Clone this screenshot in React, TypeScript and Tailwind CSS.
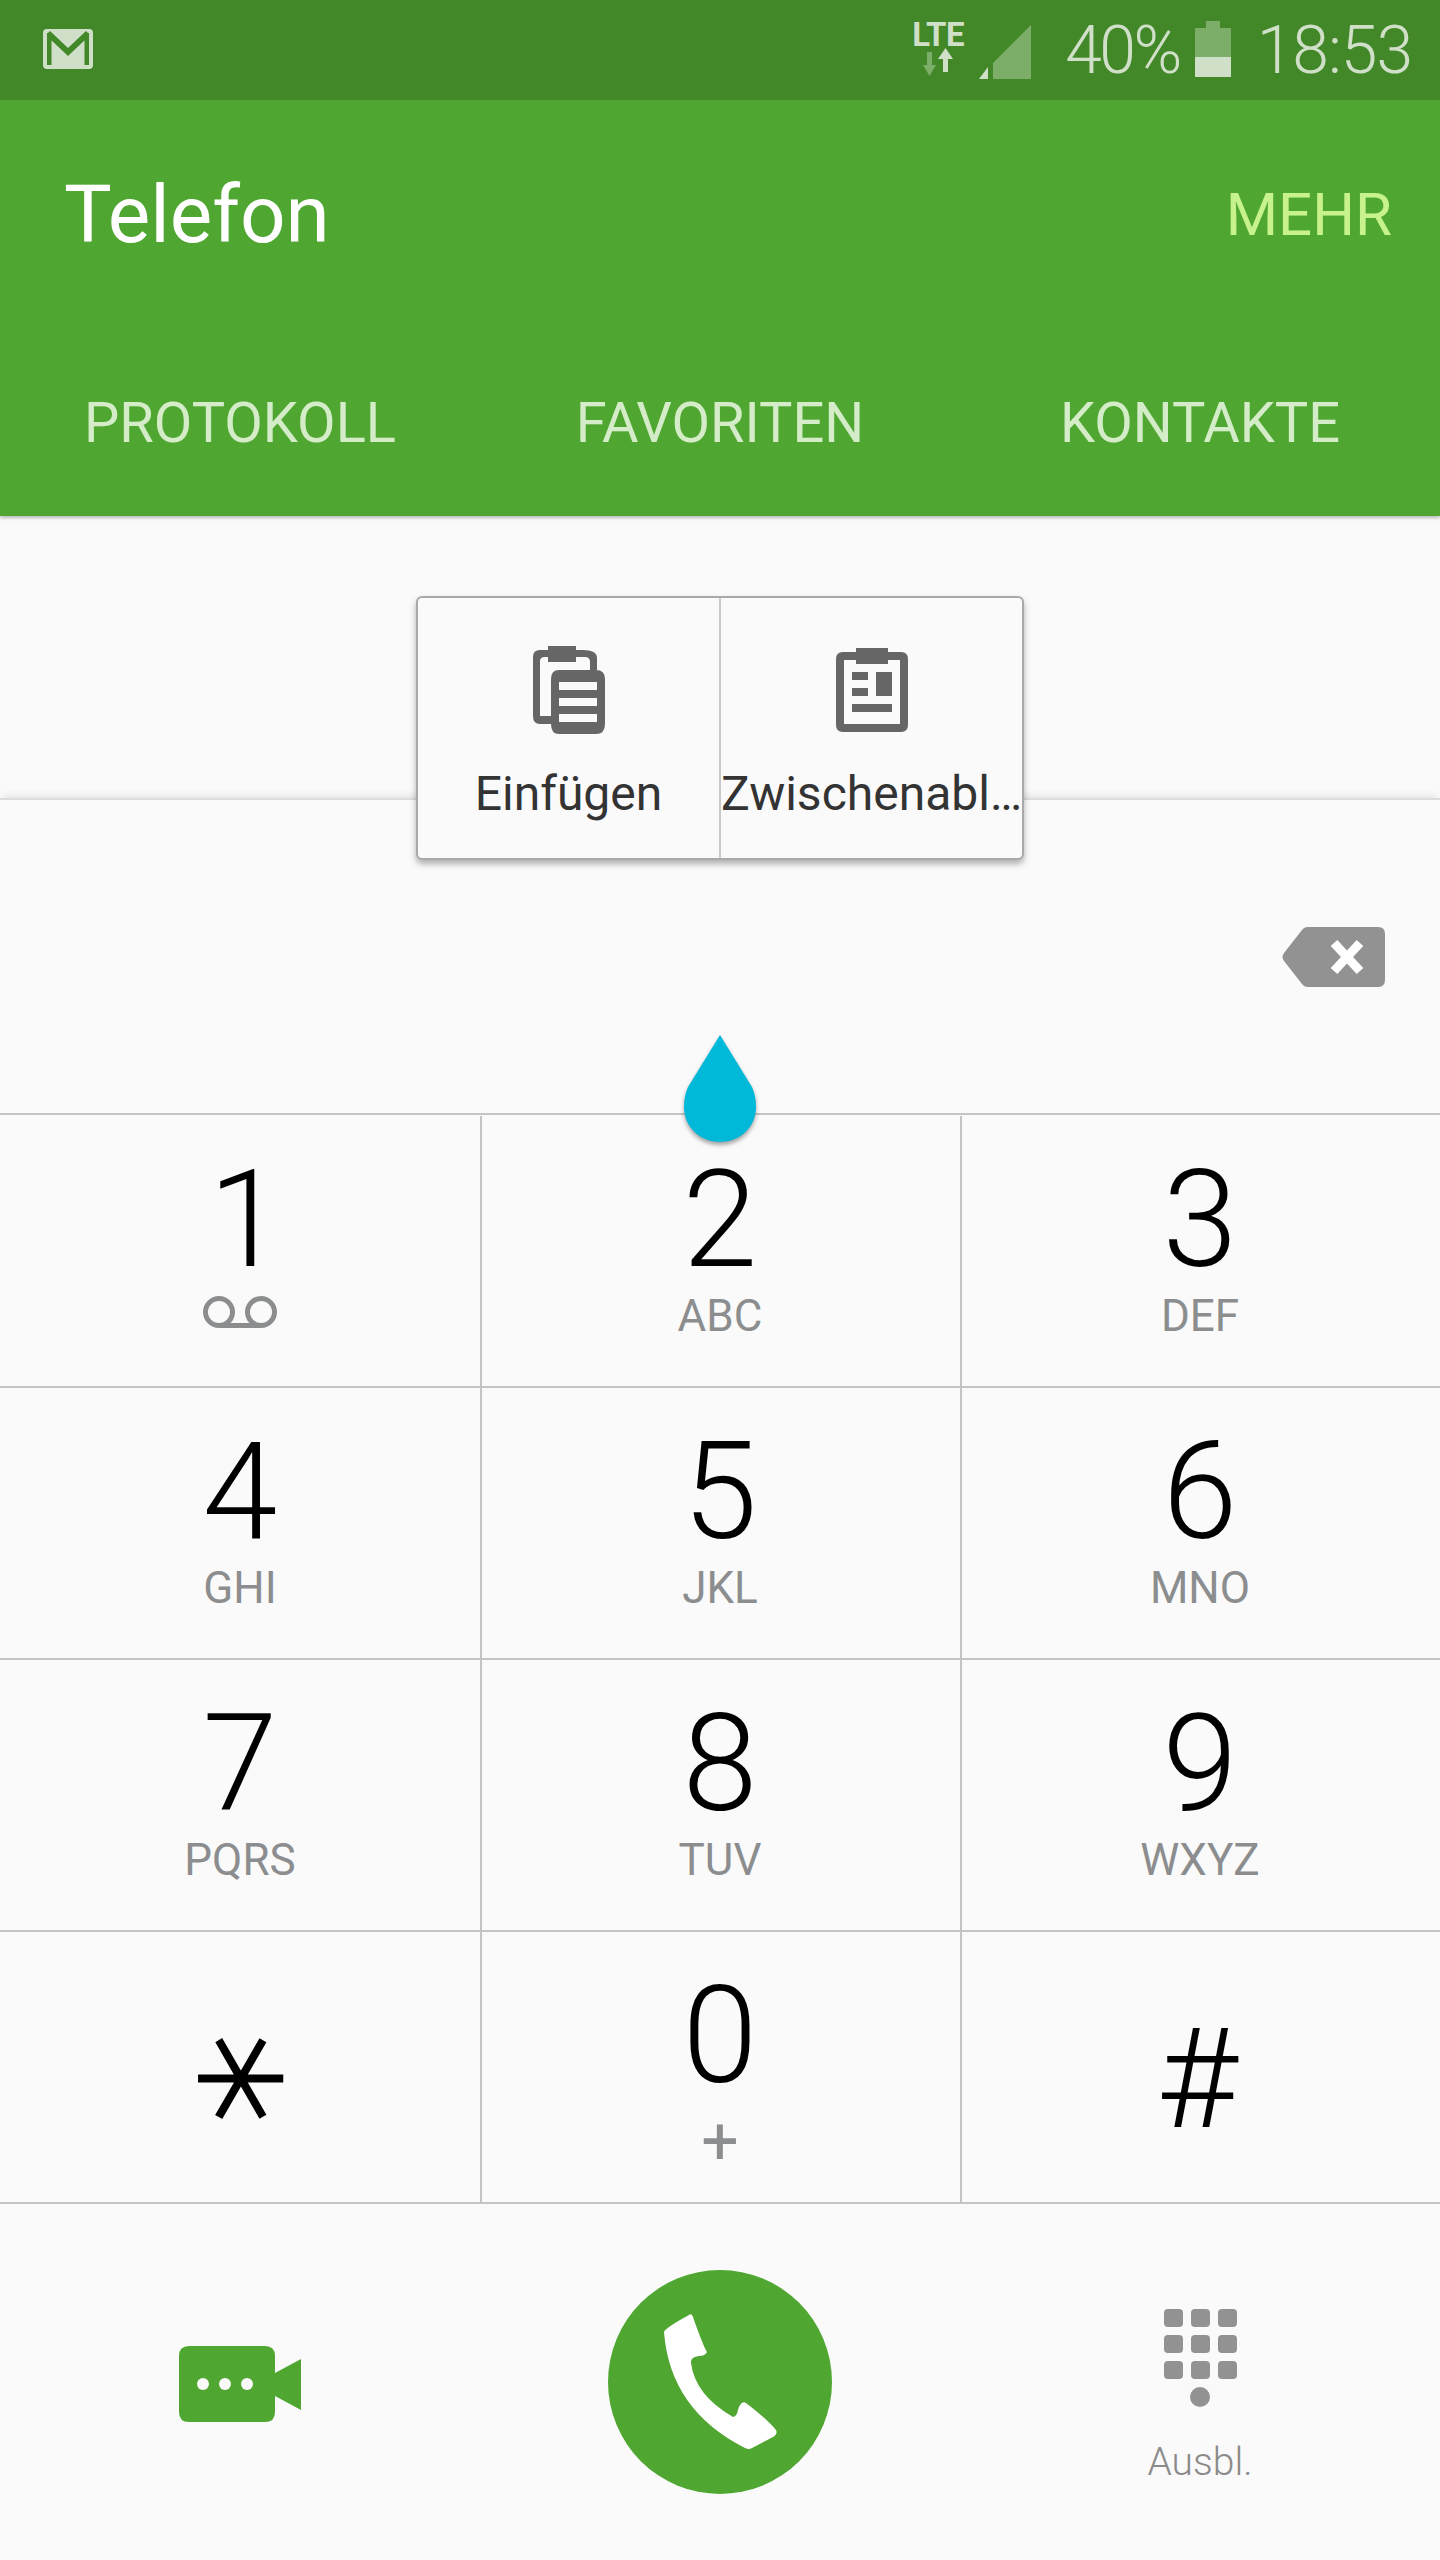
const keys = [
  { digit: "1", sub: "" },
  { digit: "2", sub: "ABC" },
  { digit: "3", sub: "DEF" },
  { digit: "4", sub: "GHI" },
  { digit: "5", sub: "JKL" },
  { digit: "6", sub: "MNO" },
  { digit: "7", sub: "PQRS" },
  { digit: "8", sub: "TUV" },
  { digit: "9", sub: "WXYZ" },
  { digit: "∗", sub: "" },
  { digit: "0", sub: "+" },
  { digit: "#", sub: "" },
];

function StatusBar() {
  return (
    <div className="h-[100px] bg-[#428828] flex items-center pl-[43px] pr-[28px] text-[#d0dfc8]">
      <svg width="50" height="40" viewBox="0 0 50 40" className="mt-[-2px]">
        <rect width="50" height="40" rx="4" fill="#d0dfc8" />
        <path d="M5 36V4M45 36V4" stroke="#428828" strokeWidth="2" />
        <path d="M6 3L25 21L44 3M7 36V8L25 25L43 8V36" fill="none" stroke="#428828" strokeWidth="3" />
      </svg>
      <div className="ml-auto flex flex-col items-center w-[56px] h-[56px]">
        <span className="text-[33px] leading-[26px] font-bold tracking-[-0.5px]">LTE</span>
        <svg width="34" height="28" viewBox="0 0 34 28">
          <path d="M6 4H11V17H15L8.5 28L2 17H6Z" fill="#7dae69" />
          <path d="M22 24V11H17L24.5 0L32 11H27V24Z" fill="#d0dfc8" />
        </svg>
      </div>
      <svg width="54" height="54" viewBox="0 0 54 54" className="ml-[12px] mt-[4px]">
        <path d="M15 38L53 0V54H15Z" fill="#7dae69" />
        <path d="M1 54L10 42V54Z" fill="#d0dfc8" />
      </svg>
      <span className="ml-[33px] mt-[2px] text-[66px] font-light leading-none tracking-[-2.5px]">40%</span>
      <div className="ml-[15px] flex flex-col items-center w-[36px] h-[56px] mt-[-2px]">
        <div className="w-[14px] h-[7px] bg-[#7dae69]" />
        <div className="w-[36px] h-[29px] bg-[#7dae69]" />
        <div className="w-[36px] h-[20px] bg-[#d0dfc8]" />
      </div>
      <span className="ml-[26px] mt-[2px] text-[66px] font-light leading-none tracking-[-1px]">18:53</span>
    </div>
  );
}

function Header() {
  return (
    <div className="h-[416px] bg-[#4fa731] shadow-[0_2px_3px_rgba(0,0,0,0.25)] relative">
      <div className="h-[230px] flex items-center justify-between pl-[64px] pr-[48px]">
        <span className="text-[80px] text-white">Telefon</span>
        <span className="text-[60px] text-[#c8f28d]">MEHR</span>
      </div>
      <div className="h-[186px] grid grid-cols-3 items-center text-[56px] text-[#d4ecc8] text-center">
        <span>PROTOKOLL</span>
        <span>FAVORITEN</span>
        <span>KONTAKTE</span>
      </div>
    </div>
  );
}

function ClipMenu() {
  return (
    <div className="absolute left-[416px] top-[596px] w-[608px] h-[264px] bg-[#fafafa] border-2 border-[#a9a9a9] rounded-[6px] shadow-[0_4px_6px_rgba(0,0,0,0.3)] flex text-[#333333] text-[48px]">
      <div className="w-[303px] border-r-2 border-[#c8c8c8] flex flex-col items-center pt-[48px]">
        <svg width="72" height="88" viewBox="0 0 72 88" fill="#666666">
          <path d="M7 4H15V0H43V4H50Q64 4 64 12V24H57V16Q57 11 52 11H43V16H15V11H12Q7 11 7 15V70H19V78H7Q0 78 0 70V11Q0 4 7 4Z" />
          <path fillRule="evenodd" d="M26 24H63Q72 24 72 33V78Q72 88 63 88H26Q18 88 18 78V33Q18 24 26 24ZM26 36V44H64V36ZM26 52V60H64V52ZM26 68V76H64V68Z" />
        </svg>
        <span className="mt-[36px] leading-none">Einfügen</span>
      </div>
      <div className="flex-1 min-w-0 flex flex-col items-center pt-[50px]">
        <svg width="72" height="84" viewBox="0 0 72 84" fill="#666666">
          <path fillRule="evenodd" d="M7 4H20V0H52V4H65Q72 4 72 11V77Q72 84 65 84H7Q0 84 0 77V11Q0 4 7 4ZM8 12V76H64V12H52V16H20V12Z" />
          <path d="M16 24H32V32H16ZM16 40H32V48H16ZM40 24H56V48H40ZM16 56H56V64H16Z" />
        </svg>
        <span className="mt-[38px] leading-none whitespace-nowrap">Zwischenabl…</span>
      </div>
    </div>
  );
}

function NumberField() {
  return (
    <div className="mt-[282px] h-[315px] border-t-2 border-[#dcdcdc] shadow-[0_-6px_8px_-4px_rgba(0,0,0,0.1)] flex justify-end pr-[54px] pt-[127px]">
      <svg width="104" height="60" viewBox="0 0 104 60">
        <path d="M26 0H96Q103 0 103 7V53Q103 60 96 60H26Q22 60 20 57L2 34Q-1 30 2 26L20 3Q22 0 26 0Z" fill="#929292" />
        <path d="M52 16L78 44M78 16L52 44" fill="none" stroke="#ffffff" strokeWidth="9" />
      </svg>
    </div>
  );
}

function Keypad() {
  return (
    <div className="grid grid-cols-3 border-t-2 border-[#c4c4c4] pt-[1px]">
      {keys.map((k, i) => (
        <div key={i} className={`h-[272px] flex flex-col items-center border-b-2 border-[#c4c4c4] ${i % 3 !== 0 ? "border-l-2 pr-[2px]" : ""}`}>
          {k.digit === "∗" || k.digit === "#" ? (
            <span className={`mt-[66px] leading-[140px] text-black ${k.digit === "∗" ? "text-[178px] font-['DejaVu_Sans',sans-serif] font-extralight [-webkit-text-stroke:4px_#000000] rotate-90 translate-x-[6px] translate-y-[11px]" : "text-[140px] font-light translate-x-[-3px] translate-y-[11px]"}`}>{k.digit}</span>
          ) : (
            <>
              <span className={`mt-[26px] text-[135px] leading-[156px] font-light text-black ${k.digit === "1" ? "translate-x-[6px]" : ""}`}>{k.digit}</span>
              {k.digit === "1" ? (
                <svg width="74" height="34" viewBox="0 0 74 34" className="mt-[-3px]" fill="none" stroke="#8b8d8f" strokeWidth="5">
                  <circle cx="16" cy="17" r="13.5" />
                  <circle cx="58" cy="17" r="13.5" />
                  <path d="M16 30.5H58" />
                </svg>
              ) : (
                <span className={`leading-[46px] text-[#8b8d8f] ${k.digit === "0" ? "mt-[5px] text-[66px]" : "text-[44px] mt-[-5px]"}`}>{k.sub}</span>
              )}
            </>
          )}
        </div>
      ))}
    </div>
  );
}

function BottomBar() {
  return (
    <div className="grid grid-cols-3 h-[354px]">
      <div className="flex justify-center pt-[142px]">
        <svg width="122" height="76" viewBox="0 0 122 76">
          <path d="M10 0H86Q96 0 96 10V27L122 13V64L96 50V66Q96 76 86 76H10Q0 76 0 66V10Q0 0 10 0Z" fill="#4fa731" />
          <circle cx="24" cy="38" r="6" fill="#fafafa" />
          <circle cx="46" cy="38" r="6" fill="#fafafa" />
          <circle cx="68" cy="38" r="6" fill="#fafafa" />
        </svg>
      </div>
      <div className="flex justify-center pt-[66px]">
        <div className="w-[224px] h-[224px] rounded-full bg-[#4fa731]">
          <svg width="224" height="224" viewBox="0 0 224 224">
            <path d="M81 45Q84 42 86 50Q96 78 99 82Q97 86 91 86Q82 87 83 93Q87 125 125 147Q129 146 130 140Q133 130 138 133Q160 150 168 160Q170 164 165 167L144 178Q141 180 137 178Q62 140 56 62Q57 58 81 45Z" fill="#ffffff" />
          </svg>
        </div>
      </div>
      <div className="flex flex-col items-center pt-[105px]">
        <div className="grid grid-cols-3 gap-x-[8px] gap-y-[8px] w-[73px]">
          {[...Array(9)].map((_, i) => (
            <div key={i} className="h-[18px] rounded-[4px] bg-[#929292]" />
          ))}
        </div>
        <div className="w-[20px] h-[20px] mt-[8px] rounded-full bg-[#929292]" />
        <span className="mt-[36px] text-[39px] font-light leading-none text-[#8b8b8b]">Ausbl.</span>
      </div>
    </div>
  );
}

export default function App() {
  return (
    <div className="relative w-[1440px] h-[2560px] overflow-hidden bg-[#fafafa] font-['Roboto',sans-serif]">
      <StatusBar />
      <Header />
      <NumberField />
      <Keypad />
      <BottomBar />
      <ClipMenu />
      <svg width="76" height="112" viewBox="0 0 76 112" className="absolute left-[682px] top-[1034px] drop-shadow-[0_3px_2px_rgba(0,0,0,0.35)]">
        <path d="M38 1L70 53Q74 62 74 73C74 93 58 108 38 108C18 108 2 93 2 73Q2 62 6 53Z" fill="#00b8d8" />
      </svg>
    </div>
  );
}
